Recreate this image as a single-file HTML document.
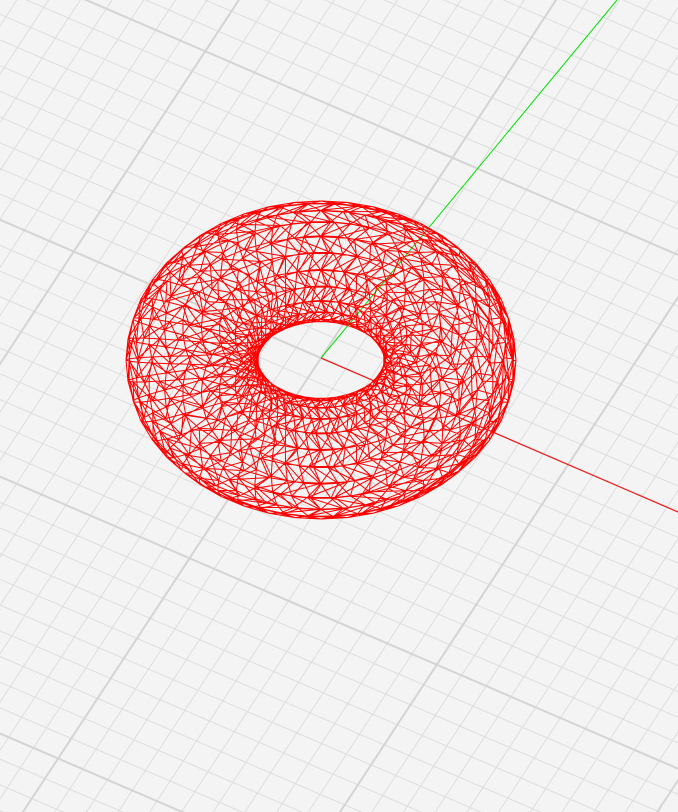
<!DOCTYPE html>
<html><head><meta charset="utf-8"><style>
html,body{margin:0;padding:0;background:#f4f4f4;overflow:hidden;width:678px;height:812px}
svg{display:block}
</style></head><body>
<svg id="s" width="678" height="812" viewBox="0 0 678 812" xmlns="http://www.w3.org/2000/svg">
<rect width="678" height="812" fill="#f4f4f4"/>
<g id="grid" transform="translate(321,358) scale(1,0.81) rotate(28)"></g>
<line x1="321" y1="358" x2="617" y2="0" stroke="#00e000" stroke-width="1"/>
<g id="torus"></g>
<line x1="321" y1="358" x2="678" y2="512" stroke="#ff0000" stroke-width="1"/>
</svg>
<script>
(function(){
var ns="http://www.w3.org/2000/svg";
var g=document.getElementById('grid');var s=28,N=50,d="",D="";
for(var i=-N;i<=N;i++){
 var p=i*s,L=N*s;
 var seg="M"+p+" "+(-L)+"V"+L+"M"+(-L)+" "+p+"H"+L;
 if(i%10==0)D+=seg;else d+=seg;
}
var a=document.createElementNS(ns,'path');a.setAttribute('d',d);a.setAttribute('stroke','#dddddd');a.setAttribute('stroke-width','1');a.setAttribute('fill','none');a.setAttribute('vector-effect','non-scaling-stroke');g.appendChild(a);
var b=document.createElementNS(ns,'path');b.setAttribute('d',D);b.setAttribute('stroke','#d4d4d4');b.setAttribute('stroke-width','2');b.setAttribute('fill','none');b.setAttribute('vector-effect','non-scaling-stroke');g.appendChild(b);
var t=document.getElementById('torus');
var R=129,r=66,se=0.765,ce=0.5,cx=321,cy=360,U=44,V=22,pd="";
function P(i,j){var u=i/U*2*Math.PI+(j%2)*Math.PI/U,v=j/V*2*Math.PI;
 var x=(R+r*Math.cos(v))*Math.cos(u),y=(R+r*Math.cos(v))*Math.sin(u),z=r*Math.sin(v);
 return (cx+x).toFixed(1)+" "+(cy+y*se-z*ce).toFixed(1);}
for(var i=0;i<U;i++)for(var j=0;j<V;j++){
 var p0=P(i,j),p1=P(i+1,j),p2=P(i,j+1);
 pd+="M"+p0+"L"+p1+"M"+p0+"L"+p2+"M"+p1+"L"+p2;
}
var c=document.createElementNS(ns,'path');c.setAttribute('d',pd);c.setAttribute('stroke','#ff0000');c.setAttribute('stroke-width','1');c.setAttribute('fill','none');t.appendChild(c);
})();
</script>
</body></html>
